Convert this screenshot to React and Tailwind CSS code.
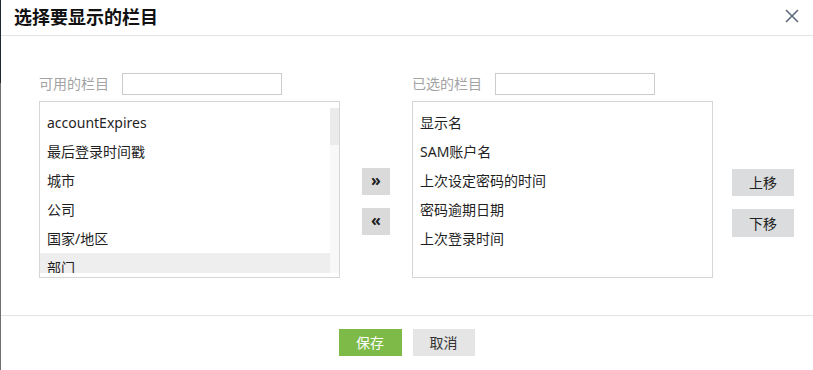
import React from 'react'

const available = ['accountExpires', '最后登录时间戳', '城市', '公司', '国家/地区', '部门']

const selected = ['显示名', 'SAM账户名', '上次设定密码的时间', '密码逾期日期', '上次登录时间']

const font = { fontFamily: '"Noto Sans", "Noto Sans CJK SC", sans-serif' }

function Column({ label, items, scroll, highlight }) {
  return (
    <div className="w-[301px] flex flex-col">
      <div className="flex items-center h-[22px]">
        <span className="w-[83px] text-[14px] text-[#a3a3a3] leading-none">{label}</span>
        <input className="w-[160px] h-[22px] border border-[#cccccc] outline-none px-1 text-[13px]" />
      </div>
      <div className="mt-[6px] h-[177px] border border-[#d6d6d6] bg-white pt-[6px]">
        <div className="h-[165px] flex">
          <div className="flex-1 overflow-hidden">
            {items.map((it) => (
              <div
                key={it}
                className={`h-[29px] leading-[29px] px-[7px] text-[14px] text-[#1f1f1f] whitespace-nowrap ${
                  it === highlight ? 'bg-[#eeeeee]' : ''
                }`}
              >
                {it}
              </div>
            ))}
          </div>
          {scroll && (
            <div className="w-[9px] bg-[#f8f8f8]">
              <div className="h-[37px] bg-[#ebebeb]" />
            </div>
          )}
        </div>
      </div>
    </div>
  )
}

export default function App() {
  return (
    <div className="w-[813px] h-[370px] flex bg-white overflow-hidden" style={font}>
      <div className="w-px flex flex-col">
        <div className="h-[83px] bg-[#1f2b30]" />
        <div className="flex-1 bg-[#6f6f6f]" />
      </div>
      <div className="flex-1 flex flex-col">
        <div className="h-[36px] border-b border-[#e3e3e3] flex items-center justify-between pl-[13px] pr-[14px]">
          <h1 className="text-[18px] font-bold text-[#111] leading-none pb-px">选择要显示的栏目</h1>
          <button className="w-[14px] h-[14px] mb-[3px] text-[#5d6b7a]">
            <svg viewBox="0 0 14 14" width="14" height="14" fill="none" stroke="currentColor" strokeWidth="1.6">
              <path d="M1 1 L13 13 M13 1 L1 13" />
            </svg>
          </button>
        </div>

        <div className="h-[280px] border-b border-[#e3e3e3] flex pl-[38px] pt-[37px]">
          <Column label="可用的栏目" items={available} scroll highlight="部门" />
          <div className="w-[28px] ml-[22px] pt-[95px] flex flex-col gap-[13px]">
            <button className="h-[27px] bg-[#dadada] text-[#222] font-bold text-[16px] leading-none pb-[3px]">»</button>
            <button className="h-[27px] bg-[#dadada] text-[#222] font-bold text-[16px] leading-none pb-[3px]">«</button>
          </div>
          <div className="ml-[22px]">
            <Column label="已选的栏目" items={selected} />
          </div>
          <div className="w-[62px] ml-[19px] pt-[96px] flex flex-col gap-[13px]">
            <button className="h-[27px] bg-[#dadcdd] text-[#222] text-[14px]">上移</button>
            <button className="h-[28px] bg-[#dadcdd] text-[#222] text-[14px]">下移</button>
          </div>
        </div>

        <div className="flex-1 flex justify-center pt-[13px] gap-[11px] pr-px">
          <button className="w-[63px] h-[27px] bg-[#7dba48] text-white text-[14px]">保存</button>
          <button className="w-[62px] h-[27px] bg-[#e5e5e5] text-[#333] text-[14px]">取消</button>
        </div>
      </div>
    </div>
  )
}
